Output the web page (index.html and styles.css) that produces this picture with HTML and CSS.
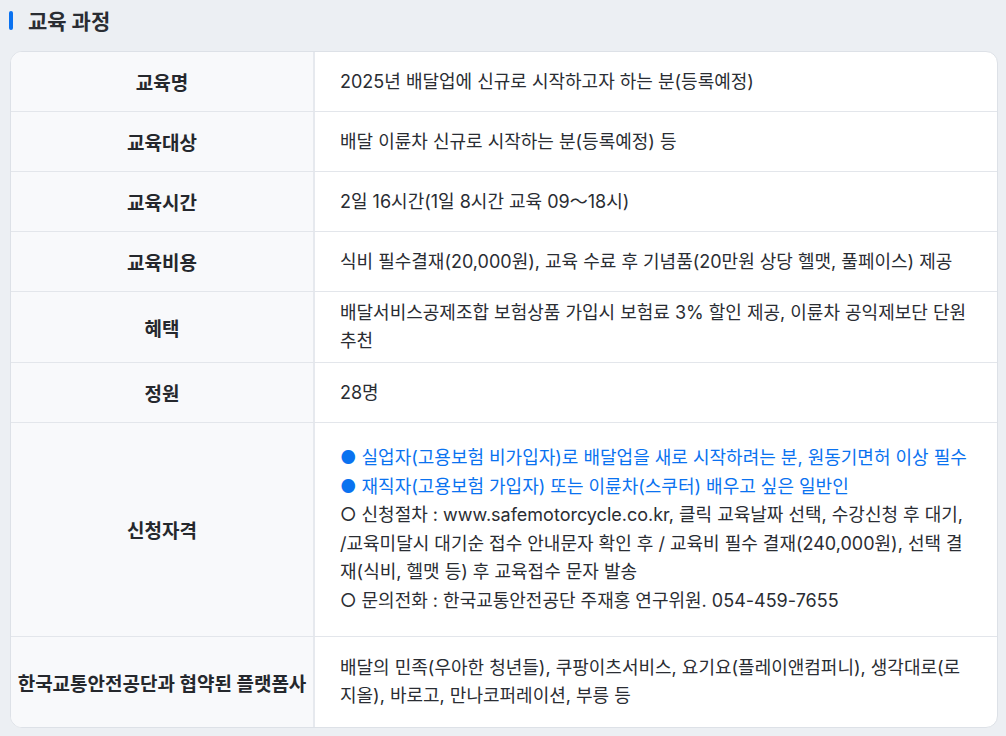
FILE: index.html
```html
<!DOCTYPE html>
<html lang="ko">
<head>
  <meta charset="UTF-8">
  <meta name="viewport" content="width=device-width, initial-scale=1.0">
  <title>교육 과정</title>
  <link rel="stylesheet" href="styles.css">
</head>
<body>
  <div class="section-title">
    <span class="title-bar"></span>
    <h2>교육 과정</h2>
  </div>

  <div class="course-card">
    <div class="course-row">
      <div class="course-label">교육명</div>
      <div class="course-value">2025년 배달업에 신규로 시작하고자 하는 분(등록예정)</div>
    </div>
    <div class="course-row">
      <div class="course-label">교육대상</div>
      <div class="course-value">배달 이륜차 신규로 시작하는 분(등록예정) 등</div>
    </div>
    <div class="course-row">
      <div class="course-label">교육시간</div>
      <div class="course-value">2일 16시간(1일 8시간 교육 09～18시)</div>
    </div>
    <div class="course-row">
      <div class="course-label">교육비용</div>
      <div class="course-value">식비 필수결재(20,000원), 교육 수료 후 기념품(20만원 상당 헬맷, 풀페이스) 제공</div>
    </div>
    <div class="course-row">
      <div class="course-label">혜택</div>
      <div class="course-value">배달서비스공제조합 보험상품 가입시 보험료 3% 할인 제공, 이륜차 공익제보단 단원 추천</div>
    </div>
    <div class="course-row">
      <div class="course-label">정원</div>
      <div class="course-value">28명</div>
    </div>
    <div class="course-row row-tall">
      <div class="course-label">신청자격</div>
      <div class="course-value">
        <p class="highlight">● 실업자(고용보험 비가입자)로 배달업을 새로 시작하려는 분, 원동기면허 이상 필수</p>
        <p class="highlight">● 재직자(고용보험 가입자) 또는 이륜차(스쿠터) 배우고 싶은 일반인</p>
        <p>○ 신청절차 : www.safemotorcycle.co.kr, 클릭 교육날짜 선택, 수강신청 후 대기, /교육미달시 대기순 접수 안내문자 확인 후 / 교육비 필수 결재(240,000원), 선택 결재(식비, 헬맷 등) 후 교육접수 문자 발송</p>
        <p>○ 문의전화 : 한국교통안전공단 주재홍 연구위원. 054-459-7655</p>
      </div>
    </div>
    <div class="course-row row-last">
      <div class="course-label">한국교통안전공단과 협약된 플랫폼사</div>
      <div class="course-value">배달의 민족(우아한 청년들), 쿠팡이츠서비스, 요기요(플레이앤컴퍼니), 생각대로(로지올), 바로고, 만나코퍼레이션, 부릉 등</div>
    </div>
  </div>
</body>
</html>
```

FILE: styles.css
```css
body {
  margin: 0;
  padding: 0 8px 10px 10px;
  background-color: #eceff3;
  font-family: Inter, "Noto Sans CJK KR", sans-serif;
  color: #2a2d33;
}

.section-title {
  display: flex;
  align-items: center;
  height: 40px;
  margin-left: -1px;
  margin-bottom: 11px;
}

.title-bar {
  width: 4px;
  height: 19px;
  border-radius: 2px;
  background-color: #0a72f0;
  margin-right: 15px;
}

.section-title h2 {
  margin: 0;
  font-size: 21px;
  font-weight: 700;
  color: #2a2d33;
}

.course-card {
  background-color: #ffffff;
  border: 1px solid #dde1e7;
  border-radius: 12px;
  overflow: hidden;
}

.course-row {
  display: grid;
  grid-template-columns: 304px 1fr;
  min-height: 59px;
  border-bottom: 1px solid #e3e6eb;
}

.course-row:last-child {
  border-bottom: none;
}

.course-label {
  display: flex;
  align-items: center;
  justify-content: center;
  background-color: #f8f9fb;
  border-right: 2px solid #e6e9ee;
  font-size: 19px;
  font-weight: 700;
  color: #25282d;
}

.course-value {
  display: flex;
  flex-direction: column;
  justify-content: center;
  padding: 7px 27px 7px 25px;
  font-size: 18px;
  line-height: 28px;
}

.course-value p {
  margin: 0;
}

.highlight {
  color: #0a72f0;
}

.row-tall .course-value {
  padding-top: 21px;
  padding-bottom: 21px;
  line-height: 28.5px;
}

.row-last .course-value {
  padding-top: 17px;
  padding-bottom: 17px;
}
```
